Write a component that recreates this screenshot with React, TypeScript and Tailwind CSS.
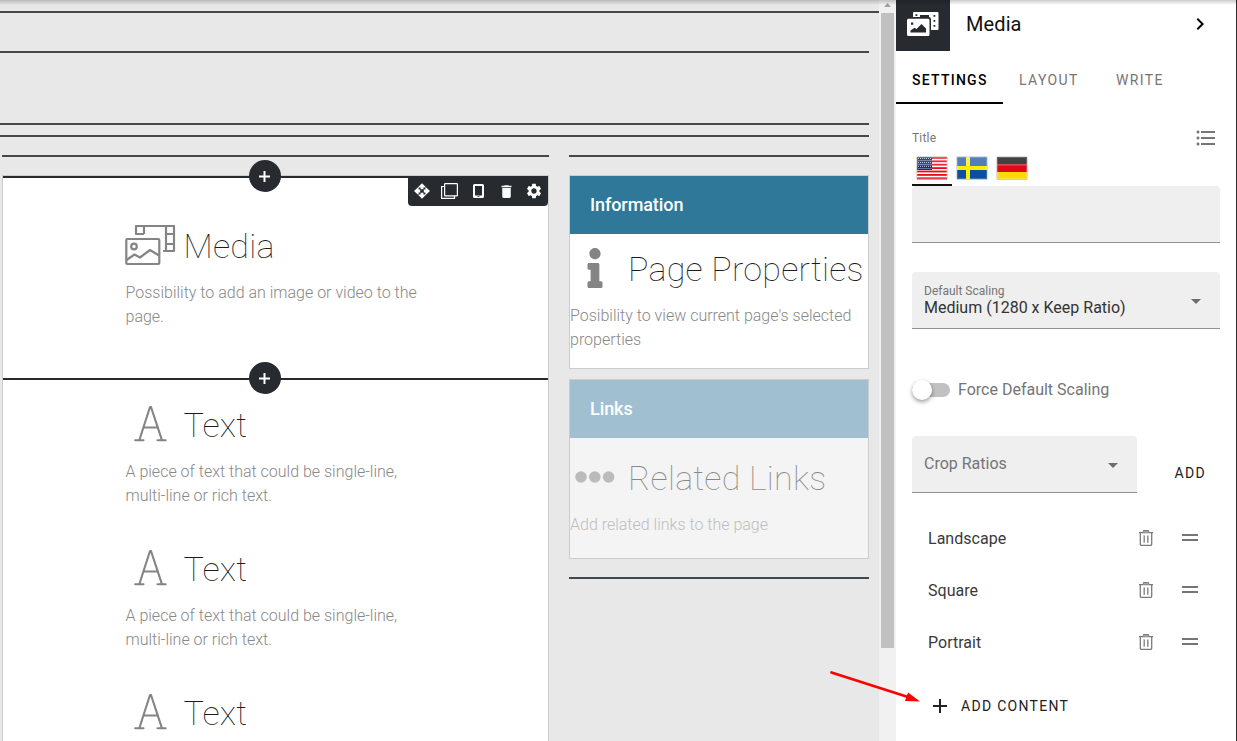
import type { ReactNode } from "react";
import { MdDelete, MdSettings, MdChevronRight, MdFormatListBulleted } from "react-icons/md";
import { FaInfo } from "react-icons/fa";

function MediaIcon() {
  return (
    <svg className="-ml-[0.6px] overflow-visible" width="50" height="40" viewBox="0 0 50 40" fill="none" stroke="#848484" strokeWidth="2.2" strokeLinejoin="round">
      <rect x="1.3" y="14" width="33" height="25" rx="1" />
      <circle cx="9" cy="21.5" r="2.8" />
      <path d="M1.5 35L9.5 29.5L15 32.5L25 25L34 30.5" />
      <path d="M19 9H11V1H49V26H38M19 1V9M41 1V26M41 9H49M41 19H49" />
    </svg>
  );
}

function LetterIcon() {
  return (
    <svg className="-ml-[0.6px]" width="50" height="40" viewBox="0 0 50 40" fill="none" stroke="#848484" strokeWidth="2.1" strokeLinecap="round" strokeLinejoin="round">
      <path d="M14.3 36.3L25 3H26L37 36.3M18.5 23.5H33M10.2 36.3H18.5M32.5 36.3H40.7" />
    </svg>
  );
}

function Dots() {
  return (
    <svg width="50" height="40" viewBox="0 0 50 40" fill="#848484">
      <circle cx="11" cy="20" r="5.8" />
      <circle cx="24.8" cy="20" r="5.8" />
      <circle cx="38.6" cy="20" r="5.8" />
    </svg>
  );
}

function Block({ icon, title, text }: { icon: ReactNode; title: string; text: string }) {
  return (
    <div>
      <div className="flex h-10 items-center gap-2">
        <div className="w-[50px] shrink-0">{icon}</div>
        <h2 className="pt-px text-[34px] leading-10 font-thin tracking-[0.25px] whitespace-nowrap text-[#1c1c1c]">{title}</h2>
      </div>
      <p className="mt-4 w-[300px] text-[16px] leading-6 font-light text-[#888]">{text}</p>
    </div>
  );
}

function AddButton() {
  return (
    <button className="absolute -top-4 left-[246px] flex size-8 items-center justify-center rounded-full bg-[#272b30] pr-px text-white">
      <svg width="11" height="11" viewBox="0 0 11 11" fill="currentColor"><path d="M4.5 0H6.5V4.5H11V6.5H6.5V11H4.5V6.5H0V4.5H4.5Z" /></svg>
    </button>
  );
}

function Toolbar() {
  return (
    <div className="absolute top-0 right-0 flex h-[30px] w-[140px] rounded-b-[4px] bg-[#272b30] text-white">
      <div className="flex flex-1 items-center justify-center pr-px">
        <svg width="16" height="16" viewBox="0 0 16 16" fill="currentColor">
          <path d="M8 0.3L12.2 4.6H9.4V6.3H6.6V4.6H3.8ZM8 15.7L12.2 11.4H9.4V9.7H6.6V11.4H3.8ZM0 8L4.6 3.8V6.6H6.2V9.4H4.6V12.2ZM16 8L11.4 3.8V6.6H9.8V9.4H11.4V12.2Z" />
        </svg>
      </div>
      <div className="flex flex-1 items-center justify-center pr-px">
        <svg width="17" height="16" viewBox="0 0 17 16" fill="none" stroke="currentColor" strokeWidth="1.2">
          <rect x="3.6" y="0.6" width="12.8" height="12.3" rx="0.6" />
          <path d="M3.4 3.5H0.6V15.4H13.5V13" />
        </svg>
      </div>
      <div className="flex flex-1 items-center justify-center pr-px">
        <svg width="11" height="14" viewBox="0 0 11 14" fill="currentColor">
          <path fillRule="evenodd" d="M1.5 0H9.5Q11 0 11 1.5V12.5Q11 14 9.5 14H1.5Q0 14 0 12.5V1.5Q0 0 1.5 0ZM2 2V11.5H9V2ZM4.5 12.3V13H6.5V12.3Z" />
        </svg>
      </div>
      <div className="flex flex-1 items-center justify-center pr-px"><MdDelete size={17} /></div>
      <div className="flex flex-1 items-center justify-center"><MdSettings size={18} /></div>
    </div>
  );
}

function Rule() {
  return <div className="h-[2px] w-full shrink-0 bg-[#45484a]" />;
}

function Canvas() {
  return (
    <main className="h-full w-[879px] shrink-0 overflow-hidden bg-[#e8e8e8]">
      <div className="pt-[11px]"><Rule /></div>
      <div className="mr-[10px] pt-[38px]"><Rule /></div>
      <div className="mr-[10px] flex flex-col gap-[10px] pt-[70px]"><Rule /><Rule /></div>
      <div className="flex gap-5 pt-[18px] pl-[2px]">
        <section className="w-[547px]">
          <Rule />
          <div className="mt-[18px] border border-[#ccc] bg-white">
            <div className="relative h-[202px] border-t-2 border-[#272b30] pt-[47px] pl-[122.5px]">
              <div className="absolute -top-[2px] left-0 w-full">
                <AddButton />
                <Toolbar />
              </div>
              <Block icon={<MediaIcon />} title="Media" text="Possibility to add an image or video to the page." />
            </div>
            <div className="relative flex h-[500px] flex-col gap-10 border-t-2 border-[#272b30] pt-[24px] pl-[122.5px]">
              <div className="absolute -top-[2px] left-0"><AddButton /></div>
              {[0, 1, 2].map((i) => (
                <Block key={i} icon={<LetterIcon />} title="Text" text="A piece of text that could be single-line, multi-line or rich text." />
              ))}
            </div>
          </div>
        </section>
        <section className="w-[300px]">
          <Rule />
          <div className="mt-[18px] h-[194px] border border-[#ccc] bg-white">
            <h3 className="flex h-[58px] items-center bg-[#2f7899] pb-[2px] pl-5 text-[18px] font-medium tracking-[-0.08px] text-white">Information</h3>
            <div className="pt-[14px]">
              <Block
                icon={<div className="flex justify-center text-[#848484]"><FaInfo size={40} /></div>}
                title="Page Properties"
                text="Posibility to view current page's selected properties"
              />
            </div>
          </div>
          <div className="mt-[10px] h-[180px] border border-[#ccc] bg-[#f4f4f4]">
            <h3 className="flex h-[58px] items-center bg-[#a0c0d1] pb-[2px] pl-5 text-[18px] font-medium tracking-[-0.08px] text-white">Links</h3>
            <div className="pt-[19px] opacity-50">
              <Block icon={<Dots />} title="Related Links" text="Add related links to the page" />
            </div>
          </div>
          <div className="mt-[18px]"><Rule /></div>
        </section>
      </div>
    </main>
  );
}

function Flag({ kind }: { kind: "us" | "se" | "de" }) {
  return (
    <svg width="32" height="24" viewBox="0 0 32 24">
      <rect x="0.5" y="0.5" width="31" height="23.2" rx="1" fill="#b9bcc0" />
      <g transform="translate(1 1)">
        {kind === "us" && (
          <>
            <rect width="30" height="22" fill="#fff" />
            {[0, 1, 2, 3, 4, 5, 6].map((i) => (
              <rect key={i} y={i * 3.4} width="30" height="1.8" fill="#e60a18" />
            ))}
            <rect width="15" height="13" fill="#1c2878" />
            {[0, 1, 2, 3, 4, 5].map((r) =>
              [0, 1, 2, 3, 4, 5, 6].map((c) => (
                <rect key={`${r}-${c}`} x={1 + c * 2 + (r % 2 ? 0.5 : 0)} y={1 + r * 2} width="1" height="1" fill="#b4b9d8" />
              ))
            )}
          </>
        )}
        {kind === "se" && (
          <>
            <rect width="30" height="22" fill="#0a4fa2" />
            <path d="M11 0V22M0 11H30" stroke="#ffed00" strokeWidth="4" />
          </>
        )}
        {kind === "de" && (
          <>
            <rect width="30" height="7.3" fill="#222" />
            <rect y="7.3" width="30" height="7.7" fill="#de0a17" />
            <rect y="15" width="30" height="7" fill="#fdd90a" />
          </>
        )}
        <rect width="30" height="9" fill="#fff" opacity={kind === "se" ? 0.28 : 0.14} />
        <rect x="0.5" y="0.5" width="29" height="21" fill="none" stroke="#fff" opacity="0.2" />
      </g>
    </svg>
  );
}

function Caret() {
  return (
    <svg width="10" height="5" viewBox="0 0 10 5" fill="#6d6d6d">
      <path d="M0 0H10L5 5Z" />
    </svg>
  );
}

function CropRow({ name }: { name: string }) {
  return (
    <div className="flex h-[52px] items-center pr-[22px] pl-4 text-[16px] tracking-[0.02px] text-[#3a3a3a]">
      <span className="flex-1 pt-[2px]">{name}</span>
      <svg width="14" height="16" viewBox="0 0 14 16" fill="none" stroke="#7b7b7b" strokeWidth="1.3">
        <path d="M0 2.7H14M4 2.5L4.8 0.7H9.2L10 2.5M1.3 3V14.3Q1.3 15.4 2.4 15.4H11.6Q12.7 15.4 12.7 14.3V3M5.2 5.5V12.7M8.8 5.5V12.7" />
        <path d="M4.8 1H9.2L10 2.6H4Z" fill="#aaa" stroke="none" />
      </svg>
      <svg className="mb-px ml-[29px]" width="16" height="7" viewBox="0 0 16 7" fill="#757575">
        <path d="M0 0H16V2H0ZM0 5H16V7H0Z" />
      </svg>
    </div>
  );
}

function Panel() {
  return (
    <aside className="flex h-full w-[340px] shrink-0 flex-col bg-white">
      <header className="flex h-[51px] items-center">
        <div className="flex h-[51px] w-[54px] items-center justify-center bg-[#272b30] pb-[3px]">
          <svg width="32" height="24" viewBox="0 0 32 24" fill="#fff">
            <path fillRule="evenodd" d="M7 0H30.5Q31.5 0 31.5 1V17Q31.5 18 30.5 18H24V7.5Q24 5 21.5 5H6V1Q6 0 7 0ZM8.5 2.3V4H10.3V2.3ZM26.5 3V4.8H28.3V3ZM26.5 8V9.8H28.3V8ZM26.5 13V14.8H28.3V13Z" />
            <path d="M13 3H22V6H13Z" fill="#272b30" />
            <path fillRule="evenodd" d="M1.5 6.8H21Q22.5 6.8 22.5 8.3V22.5Q22.5 24 21 24H1.5Q0 24 0 22.5V8.3Q0 6.8 1.5 6.8ZM3.5 20.5H19V16.5L14.5 12L9.5 17L7.5 15.8L3.5 18.5ZM4 10.5V12.8H6.3V10.5Z" />
          </svg>
        </div>
        <h1 className="flex-1 pb-[3px] pl-4 text-[20px] tracking-[0.1px] text-[#111]">Media</h1>
        <MdChevronRight size={24} className="mr-6 mb-[3px] text-black" />
      </header>
      <nav className="flex h-[53px] text-[14px] tracking-[1.4px] text-[#757575]">
        <div className="flex w-[107px] items-center border-b-2 border-black pt-[7px] pl-4 font-medium tracking-[1.25px] text-black">SETTINGS</div>
        <div className="flex w-[97px] items-center pt-[7px] pb-[2px] pl-4">LAYOUT</div>
        <div className="flex items-center pt-[7px] pb-[2px] pl-4">WRITE</div>
      </nav>
      <div className="flex flex-col px-4 pt-[22px]">
        <div className="flex h-6 items-center justify-between text-[12px] tracking-[0.2px] text-[#777]">
          <span>Title</span>
          <MdFormatListBulleted size={24} className="mr-[2px]" />
        </div>
        <div className="flex h-9">
          <div className="flex w-10 justify-center border-b-2 border-[#111] pt-[6px]"><Flag kind="us" /></div>
          <div className="flex w-10 justify-center pt-[6px]"><Flag kind="se" /></div>
          <div className="flex w-10 justify-center pt-[6px]"><Flag kind="de" /></div>
        </div>
        <div className="h-[57px] w-[308px] rounded-t-[4px] border-b border-[#919191] bg-[#efefef]" />
        <div className="mt-[29px] flex h-[57px] w-[308px] items-center justify-between rounded-t-[4px] border-b border-[#919191] bg-[#efefef] pr-[19px] pl-3">
          <div>
            <div className="text-[12px] leading-[14px] text-[#757575]">Default Scaling</div>
            <div className="text-[16px] leading-[19px] text-[#333]">Medium (1280 x Keep Ratio)</div>
          </div>
          <div className="pt-[2px]"><Caret /></div>
        </div>
        <label className="mt-[49px] flex h-6 items-center text-[16px] text-[#757575]">
          <span className="flex h-[14px] w-[38px] items-center rounded-full bg-[#c1c1c1]">
            <span className="size-5 shrink-0 rounded-full bg-white shadow-[0_2px_4px_rgba(0,0,0,0.4)]" />
          </span>
          <span className="ml-2">Force Default Scaling</span>
        </label>
        <div className="mt-[34px] flex">
          <div className="flex h-[57px] w-[225px] items-center justify-between rounded-t-[4px] border-b border-[#919191] bg-[#efefef] pr-[19px] pl-3 text-[16px] text-[#757575]">
            <span className="pb-px">Crop Ratios</span>
            <div className="pt-[2px]"><Caret /></div>
          </div>
          <button className="mt-[18px] ml-[37.5px] text-[14px] tracking-[1.3px] text-[#222]">ADD</button>
        </div>
        <div className="mt-[19px] flex flex-col">
          <CropRow name="Landscape" />
          <CropRow name="Square" />
          <CropRow name="Portrait" />
        </div>
        <button className="mt-[26px] flex h-6 items-center pl-[21px] text-[14px] tracking-[1.3px] text-[#222]">
          <svg width="14" height="14" viewBox="0 0 14 14" fill="currentColor"><path d="M6 0H8V6H14V8H8V14H6V8H0V6H6Z" /></svg>
          <span className="ml-[14px]">ADD CONTENT</span>
        </button>
      </div>
    </aside>
  );
}

export default function App() {
  return (
    <div className="relative flex h-[741px] w-[1237px] overflow-hidden font-[Roboto,sans-serif]">
      <Canvas />
      <div className="flex h-full w-[17px] shrink-0 flex-col items-center bg-[#f1f1f1]">
        <svg className="h-[13px] shrink-0" width="7" height="13" viewBox="0 0 7 13"><path d="M0 7L3.5 3L7 7Z" fill="#a0a0a0" /></svg>
        <div className="h-[635px] w-[13px] bg-[#c1c1c1]" />
      </div>
      <Panel />
      <div className="h-full w-px bg-[#2c2c2c]" />
      <div className="absolute top-0 left-0 h-[5px] w-full bg-linear-to-b from-black/20 to-transparent" />
      <svg className="absolute top-[664px] left-[824px]" width="104" height="46" viewBox="0 0 104 46">
        <path d="M7.5 8.5L84 33" stroke="#f00" strokeWidth="2.8" strokeLinecap="round" />
        <path d="M96 37.5L81 37L84 28.5Z" fill="#f00" />
      </svg>
    </div>
  );
}
